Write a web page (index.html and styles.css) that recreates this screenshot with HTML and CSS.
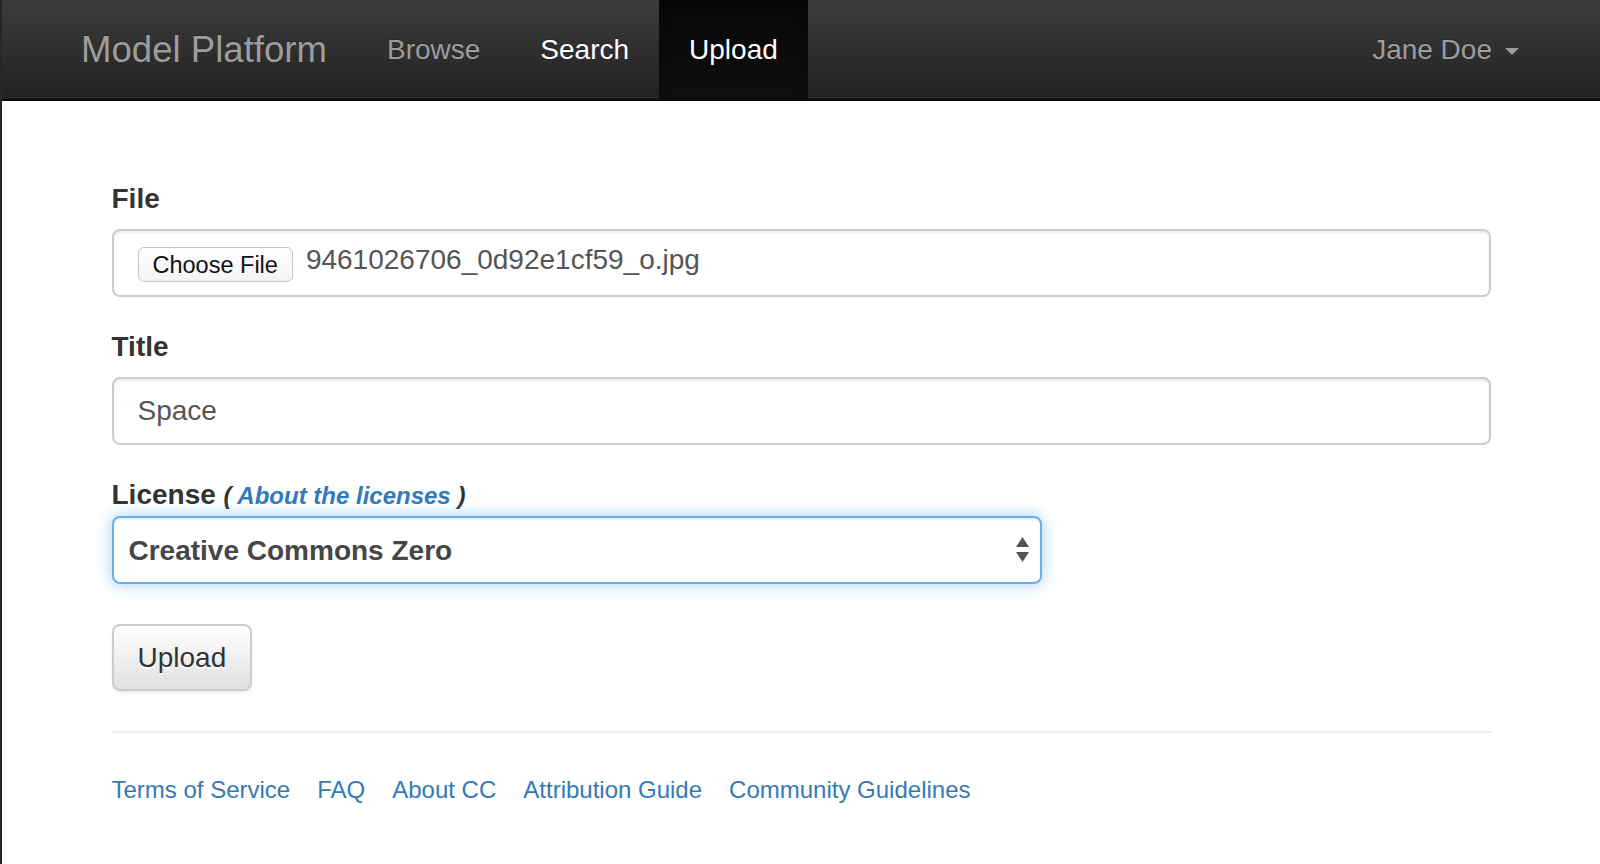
FILE: index.html
```html
<!DOCTYPE html>
<html lang="en">
<head>
<meta charset="utf-8">
<title>Upload - Model Platform</title>
<link rel="stylesheet" href="styles.css">
</head>
<body>
<nav class="navbar">
  <a class="brand" href="#">Model Platform</a>
  <ul class="nav-links">
    <li><a href="#">Browse</a></li>
    <li class="hover"><a href="#">Search</a></li>
    <li class="active"><a href="#">Upload</a></li>
  </ul>
  <div class="nav-right">
    <a href="#">Jane Doe<span class="caret"></span></a>
  </div>
</nav>
<main class="container">
  <form class="upload-form">
    <div class="form-group">
      <label>File</label>
      <div class="form-control file-control">
        <span class="file-btn">Choose File</span>
        <span class="file-name">9461026706_0d92e1cf59_o.jpg</span>
      </div>
    </div>
    <div class="form-group">
      <label for="title">Title</label>
      <input id="title" class="form-control" type="text" value="Space">
    </div>
    <div class="form-group license-group">
      <label class="license-label">License <small>( <a href="#">About the licenses</a> )</small></label>
      <div class="select-wrap">
        <select class="license-select">
          <option>Creative Commons Zero</option>
        </select>
        <svg class="select-arrows" width="13" height="25" viewBox="0 0 13 25"><path d="M0 10 L6.5 0 L13 10 Z" fill="#555"/><path d="M0 15 L13 15 L6.5 25 Z" fill="#555"/></svg>
      </div>
    </div>
    <button type="button" class="btn">Upload</button>
  </form>
  <hr class="divider">
  <footer class="footer">
    <ul class="footer-links">
      <li><a href="#">Terms of Service</a></li>
      <li><a href="#">FAQ</a></li>
      <li><a href="#">About CC</a></li>
      <li><a href="#">Attribution Guide</a></li>
      <li><a href="#">Community Guidelines</a></li>
    </ul>
  </footer>
</main>
</body>
</html>
```

FILE: styles.css
```css
html, body {
  margin: 0;
  padding: 0;
  background: #fff;
}
body {
  border-left: 2px solid #2a2620;
  min-height: 864px;
  box-sizing: border-box;
  font-family: "Liberation Sans", Arial, Helvetica, sans-serif;
  color: #333;
}
a { text-decoration: none; }

.navbar {
  display: flex;
  align-items: stretch;
  height: 99px;
  padding: 0 51px 0 79px;
  background: linear-gradient(to bottom, #3c3c3c 0%, #222 100%);
  border-bottom: 2px solid #080808;
}
.brand {
  font-size: 36.6px;
  line-height: 99px;
  color: #9d9d9d;
  margin-right: 30px;
  text-shadow: 0 -1px 0 rgba(0,0,0,.25);
}
.nav-links {
  display: flex;
  list-style: none;
  margin: 0;
  padding: 0;
}
.nav-links a,
.nav-right a {
  display: block;
  padding: 0 30px;
  font-size: 28px;
  line-height: 99px;
  color: #9d9d9d;
  text-shadow: 0 -1px 0 rgba(0,0,0,.25);
}
.nav-links .hover a { color: #fff; }
.nav-links .active a {
  color: #fff;
  background: linear-gradient(to bottom, #080808 0%, #0f0f0f 100%);
  box-shadow: inset 0 6px 10px rgba(0,0,0,.25);
}
.nav-right { margin-left: auto; }
.caret {
  display: inline-block;
  width: 0;
  height: 0;
  margin-left: 13px;
  vertical-align: middle;
  border-top: 7px solid #9d9d9d;
  border-left: 7px solid transparent;
  border-right: 7px solid transparent;
}

.container {
  width: 1379px;
  margin: 0 auto;
  padding-top: 78px;
}
.form-group { margin-bottom: 30px; }
label {
  display: block;
  font-size: 28px;
  line-height: 40px;
  font-weight: bold;
  margin-bottom: 10px;
  color: #333;
}
.form-control {
  display: block;
  width: 100%;
  height: 68px;
  box-sizing: border-box;
  padding: 12px 24px;
  border: 2px solid #ccc;
  border-radius: 8px;
  box-shadow: inset 0 2px 2px rgba(0,0,0,.075);
  background: #fff;
  font-family: "Liberation Sans", Arial, Helvetica, sans-serif;
  font-size: 28px;
  line-height: 40px;
  color: #555;
  outline: none;
}
.file-control {
  display: flex;
  align-items: center;
}
.file-btn {
  display: inline-flex;
  align-items: center;
  height: 35px;
  box-sizing: border-box;
  padding: 0 14px;
  margin-top: 3px;
  border: 1px solid #c5c5c5;
  border-radius: 6px;
  background: linear-gradient(to bottom, #fff, #f4f4f4);
  font-size: 23.5px;
  color: #111;
}
.file-name {
  margin-left: 13px;
  margin-top: -6px;
  color: #555;
}

.license-group { margin-bottom: 40px; }
.license-label { margin-bottom: 0; }
.license-label small {
  font-size: 24px;
  font-style: italic;
  font-weight: bold;
}
.license-label a { color: #337ab7; }
.select-wrap {
  position: relative;
  width: 930px;
}
.license-select {
  -webkit-appearance: none;
  appearance: none;
  display: block;
  width: 100%;
  height: 68px;
  box-sizing: border-box;
  padding: 0 40px 0 15px;
  border: 2px solid #66afe9;
  border-radius: 8px;
  background: #fff;
  box-shadow: inset 0 2px 2px rgba(0,0,0,.075), 0 0 16px rgba(102,175,233,.6);
  font-family: "Liberation Sans", Arial, Helvetica, sans-serif;
  font-size: 28px;
  font-weight: bold;
  color: #464646;
  outline: none;
}
.select-arrows {
  position: absolute;
  right: 13px;
  top: 21px;
}

.btn {
  display: inline-block;
  padding: 11px 24px;
  font-family: "Liberation Sans", Arial, Helvetica, sans-serif;
  font-size: 28px;
  line-height: 41px;
  color: #333;
  background: linear-gradient(to bottom, #fff 0%, #e0e0e0 100%);
  border: 2px solid #ccc;
  border-radius: 8px;
  text-shadow: 0 2px 0 #fff;
  box-shadow: inset 0 2px 0 rgba(255,255,255,.15), 0 2px 2px rgba(0,0,0,.075);
  cursor: pointer;
}

.divider {
  border: 0;
  border-top: 2px solid #eee;
  margin: 40px 0;
}
.footer-links {
  display: flex;
  gap: 27px;
  list-style: none;
  margin: 0;
  padding: 0;
  font-size: 24px;
  line-height: 34px;
}
.footer-links a { color: #337ab7; }
```
